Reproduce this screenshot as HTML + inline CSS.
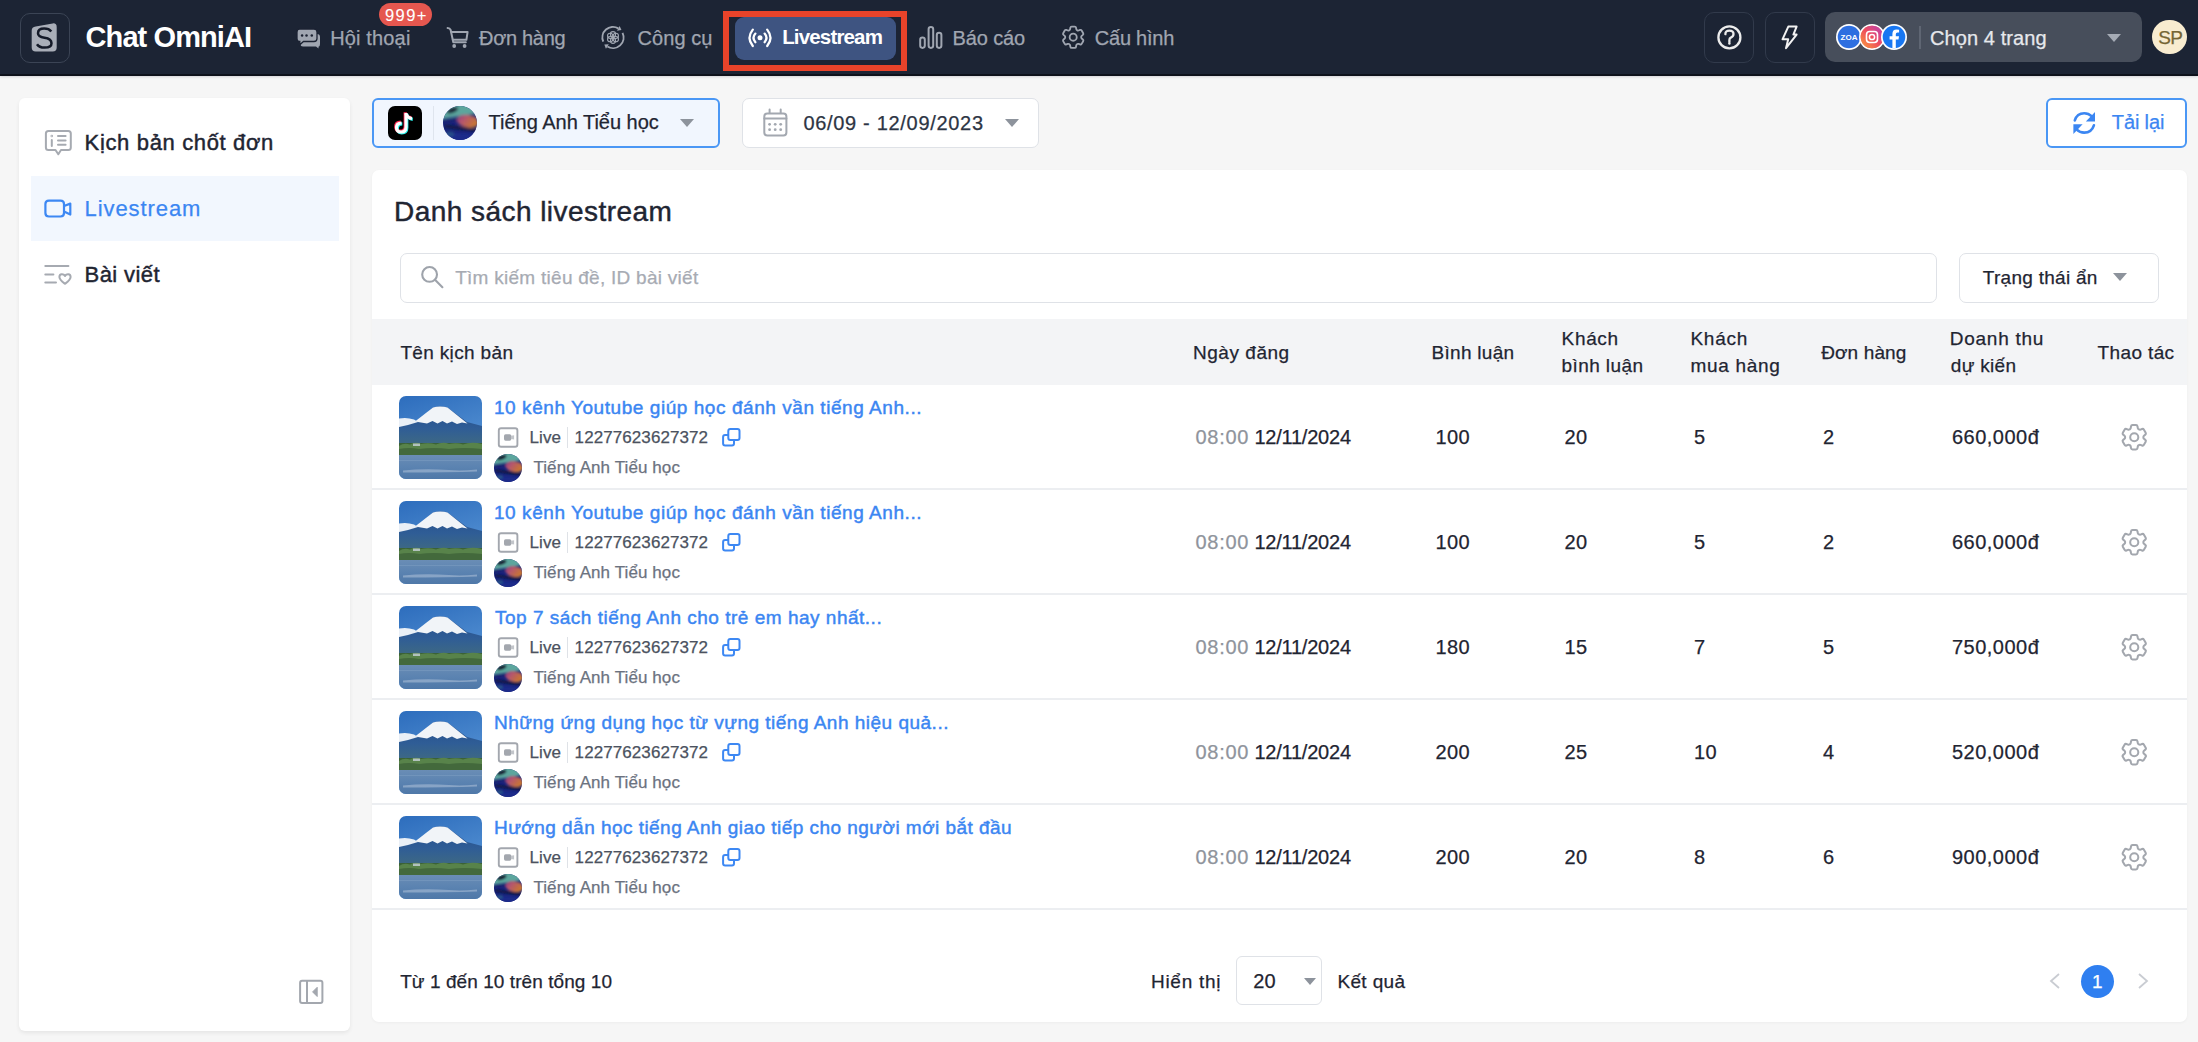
<!DOCTYPE html>
<html><head><meta charset="utf-8"><title>Chat OmniAI - Livestream</title>
<style>
html,body{margin:0;padding:0;}
body{width:2198px;height:1042px;position:relative;overflow:hidden;background:#f6f6f6;font-family:"Liberation Sans", sans-serif;}
.a{position:absolute;}
.t{position:absolute;white-space:nowrap;-webkit-text-stroke:0.25px currentColor;}
svg.a{display:block;}
</style></head><body>
<div class="a" style="left:0px;top:0px;width:2198px;height:75px;background:#1c2434;box-shadow:0 1px 3px rgba(20,20,40,0.25);"></div>
<div class="a" style="left:0px;top:73.5px;width:2198px;height:2px;background:#0e121b;"></div>
<div class="a" style="left:19.5px;top:12.5px;width:50px;height:50px;box-sizing:border-box;border:1.8px solid #3b4455;border-radius:10px;"></div>
<svg class="a" style="left:0px;top:0px" width="90" height="75" viewBox="0 0 90 75"><path d="M35.7 26.6 L52.7 23.4 Q56.7 23 56.7 27 V47.5 Q56.7 51.5 52.7 51.5 H35.7 Q31.7 51.5 31.7 47.5 V30.6 Q31.7 27.3 35.7 26.6 Z" fill="#a9aeb8"/><path d="M51.3 31.5 Q49 28.6 44.2 28.6 Q38 28.6 38 33.2 Q38 36.8 44.5 37.8 Q51.5 38.8 51.5 43.2 Q51.5 47.6 44.6 47.6 Q39.2 47.6 37 44.2" fill="none" stroke="#141a28" stroke-width="2.5" stroke-linecap="butt"/></svg>
<div class="t" id="t1" style="left:85.60px;top:22.85px;font-size:29px;line-height:29px;color:#ffffff;font-weight:700;letter-spacing:-0.920px;-webkit-text-stroke:0px;">Chat OmniAI</div>
<svg class="a" style="left:290px;top:20px" width="40" height="35" viewBox="0 0 40 35"><path d="M10.5 14 H27 Q30 14 30 17 V24 Q30 26.5 28.5 26.8 V28.5 L26 26.5 H13 Q10.5 26.5 10.5 24 Z" fill="#a0a6b1"/><path d="M9.5 9 H24 Q27 9 27 12 V18.5 Q27 21.5 24 21.5 H13.5 L9.8 24.8 V21.5 Q7 21.5 7 18.5 V12 Q7 9 9.5 9 Z" fill="#a0a6b1" stroke="#1c2333" stroke-width="1.3"/><circle cx="12.1" cy="15.4" r="1.25" fill="#1c2333"/><circle cx="16.5" cy="15.4" r="1.25" fill="#1c2333"/><circle cx="21.8" cy="15.4" r="1.25" fill="#1c2333"/></svg>
<div class="t" id="t2" style="left:330.20px;top:27.77px;font-size:20px;line-height:20px;color:#a0a6b1;font-weight:400;letter-spacing:0.150px;">Hội thoại</div>
<div class="a" style="left:379px;top:3px;width:53px;height:23px;border-radius:12px;background:#e5574f;"></div>
<div class="t" id="t3" style="left:385.00px;top:6.63px;font-size:16.5px;line-height:16.5px;color:#ffffff;font-weight:400;letter-spacing:1.400px;-webkit-text-stroke:0.1px currentColor;">999+</div>
<svg class="a" style="left:440px;top:20px" width="40" height="35" viewBox="0 0 40 35" fill="none" stroke="#a0a6b1" stroke-width="2" stroke-linejoin="round" stroke-linecap="round"><path d="M7.6 7.9 Q9.9 7.9 10.6 9.8 L13.3 22.2 H25.8"/><path d="M11.4 11.9 H27.6 L26.4 19.8 H12.8"/><circle cx="14.2" cy="26" r="1.9" fill="#a0a6b1" stroke="none"/><circle cx="24.6" cy="26" r="1.9" fill="#a0a6b1" stroke="none"/></svg>
<div class="t" id="t4" style="left:479.00px;top:27.77px;font-size:20px;line-height:20px;color:#a0a6b1;font-weight:400;letter-spacing:-0.309px;">Đơn hàng</div>
<svg class="a" style="left:595px;top:20px" width="36" height="35" viewBox="0 0 36 35" fill="none" stroke="#a0a6b1" stroke-width="1.9"><path d="M8.24 21.64 A10.6 10.6 0 0 1 23.30 8.32"/><path d="M27.53 12.85 A10.6 10.6 0 0 1 12.38 26.49"/><path d="M26.42 10.12 L24.65 5.98 L21.95 10.66 Z" fill="#a0a6b1" stroke="none"/><path d="M9.33 24.58 L10.95 28.78 L13.81 24.20 Z" fill="#a0a6b1" stroke="none"/><g stroke-width="1.1"><circle cx="20.86" cy="19.15" r="2.6"/><circle cx="18.00" cy="20.80" r="2.6"/><circle cx="15.14" cy="19.15" r="2.6"/><circle cx="15.14" cy="15.85" r="2.6"/><circle cx="18.00" cy="14.20" r="2.6"/><circle cx="20.86" cy="15.85" r="2.6"/></g><circle cx="18" cy="17.5" r="1.1" fill="#a0a6b1" stroke="none"/></svg>
<div class="t" id="t5" style="left:637.40px;top:27.77px;font-size:20px;line-height:20px;color:#a0a6b1;font-weight:400;letter-spacing:0.102px;">Công cụ</div>
<div class="a" style="left:723px;top:11px;width:184px;height:60px;box-sizing:border-box;border:6px solid #e8432a;"></div>
<div class="a" style="left:735px;top:17px;width:161px;height:43px;background:#3e5481;border-radius:9px;"></div>
<svg class="a" style="left:740px;top:20px" width="40" height="35" viewBox="0 0 40 35" fill="none" stroke="#ffffff" stroke-width="2.3" stroke-linecap="round"><path d="M12.8 9.6 Q6.2 17.8 12.8 26"/><path d="M15.4 13.6 Q11.6 17.8 15.4 22.2"/><path d="M27.2 9.6 Q33.8 17.8 27.2 26"/><path d="M24.6 13.6 Q28.4 17.8 24.6 22.2"/><circle cx="20" cy="17.8" r="2.5" fill="#fff" stroke="none"/></svg>
<div class="t" id="t6" style="left:782.20px;top:27.45px;font-size:20.5px;line-height:20.5px;color:#ffffff;font-weight:700;letter-spacing:-0.839px;-webkit-text-stroke:0px;">Livestream</div>
<svg class="a" style="left:912px;top:20px" width="40" height="35" viewBox="0 0 40 35" fill="none" stroke="#a0a6b1" stroke-width="2"><rect x="8.2" y="17.5" width="4.6" height="10.4" rx="2.3"/><rect x="16.6" y="6.9" width="4.6" height="21" rx="2.3"/><rect x="24.8" y="12.8" width="4.6" height="15.1" rx="2.3"/></svg>
<div class="t" id="t7" style="left:952.60px;top:27.77px;font-size:20px;line-height:20px;color:#a0a6b1;font-weight:400;letter-spacing:-0.135px;">Báo cáo</div>
<svg class="a" style="left:1058.5px;top:23px" width="28.4" height="28.4" viewBox="0 0 24 24" fill="none" stroke="#a0a6b1" stroke-width="1.55"><path d="M9.594 3.94c.09-.542.56-.94 1.11-.94h2.593c.55 0 1.02.398 1.11.94l.213 1.281c.063.374.313.686.645.87.074.04.147.083.22.127.325.196.72.257 1.075.124l1.217-.456a1.125 1.125 0 0 1 1.37.49l1.296 2.247a1.125 1.125 0 0 1-.26 1.431l-1.003.827c-.293.241-.438.613-.43.992a7.723 7.723 0 0 1 0 .255c-.008.378.137.75.43.991l1.004.827c.424.35.534.955.26 1.43l-1.298 2.247a1.125 1.125 0 0 1-1.369.491l-1.217-.456c-.355-.133-.75-.072-1.076.124a6.47 6.47 0 0 1-.22.128c-.331.183-.581.495-.644.869l-.213 1.281c-.09.543-.56.94-1.11.94h-2.594c-.55 0-1.019-.398-1.11-.94l-.213-1.281c-.062-.374-.312-.686-.644-.87a6.52 6.52 0 0 1-.22-.127c-.325-.196-.72-.257-1.076-.124l-1.217.456a1.125 1.125 0 0 1-1.369-.49l-1.297-2.247a1.125 1.125 0 0 1 .26-1.431l1.004-.827c.292-.24.437-.613.43-.991a6.932 6.932 0 0 1 0-.255c.007-.38-.138-.751-.43-.992l-1.004-.827a1.125 1.125 0 0 1-.26-1.43l1.297-2.247a1.125 1.125 0 0 1 1.37-.491l1.216.456c.356.133.751.072 1.076-.124.072-.044.146-.086.22-.128.332-.183.582-.495.644-.869l.214-1.28ZM15 12a3 3 0 1 1-6 0 3 3 0 0 1 6 0Z"/></svg>
<div class="t" id="t8" style="left:1094.80px;top:27.77px;font-size:20px;line-height:20px;color:#a0a6b1;font-weight:400;letter-spacing:-0.231px;">Cấu hình</div>
<div class="a" style="left:1704px;top:12px;width:50px;height:50.5px;box-sizing:border-box;border:1.8px solid #313a4b;border-radius:10px;"></div>
<svg class="a" style="left:1700px;top:8px" width="60" height="60" viewBox="0 0 60 60" fill="none" stroke="#ececec" stroke-width="2.3" stroke-linecap="round"><circle cx="29.4" cy="29.4" r="11"/><path d="M25.4 26.2 Q25.2 22.6 29.4 22.6 Q33.5 22.6 33.5 26 Q33.5 28.5 30.8 29.6 Q29.4 30.2 29.4 32 V34.3"/><circle cx="29.4" cy="35.6" r="1.2" fill="#ececec" stroke="none"/></svg>
<div class="a" style="left:1765px;top:12px;width:50px;height:50.5px;box-sizing:border-box;border:1.8px solid #313a4b;border-radius:10px;"></div>
<svg class="a" style="left:1760px;top:8px" width="60" height="60" viewBox="0 0 60 60" fill="none" stroke="#f2f2f2" stroke-width="2" stroke-linejoin="round"><path d="M28.3 18.6 H36.6 L33.4 26.6 H36.6 L26 40.2 L28.2 31.3 H22.5 Z"/></svg>
<div class="a" style="left:1825px;top:12px;width:317px;height:50px;background:#474e5b;border-radius:10px;"></div>
<svg class="a" style="left:1835px;top:22px" width="76" height="30" viewBox="0 0 76 30"><circle cx="14" cy="15" r="13" fill="#fff"/><circle cx="14" cy="15" r="11.3" fill="#2e6fe0"/><text x="14" y="18" text-anchor="middle" font-family="Liberation Sans" font-weight="700" font-size="8" fill="#fff">ZOA</text><circle cx="37" cy="15" r="13" fill="#fff"/><circle cx="37" cy="15" r="11.3" fill="#e8573f"/><circle cx="37" cy="15" r="11.3" fill="url(#ig)"/><rect x="31.5" y="9.5" width="11" height="11" rx="3.2" fill="none" stroke="#fff" stroke-width="1.6"/><circle cx="37" cy="15" r="2.6" fill="none" stroke="#fff" stroke-width="1.5"/><circle cx="59" cy="15" r="13" fill="#fff"/><circle cx="59" cy="15" r="11.3" fill="#1877f2"/><path d="M60.8 26.3 V17.5 H63.5 L64 14.2 H60.8 V12.3 Q60.8 10.6 62.5 10.6 H64.1 V7.8 Q62.8 7.6 61.6 7.6 Q57.4 7.6 57.4 11.9 V14.2 H54.6 V17.5 H57.4 V26.3 Z" fill="#fff"/><defs><linearGradient id="ig" x1="0" y1="1" x2="1" y2="0"><stop offset="0" stop-color="#f9a13a"/><stop offset="0.5" stop-color="#ef4c5e"/><stop offset="1" stop-color="#b13fc0"/></linearGradient></defs></svg>
<div class="a" style="left:1919px;top:26px;width:1.5px;height:23px;background:#5f6673;"></div>
<div class="t" id="t9" style="left:1930.00px;top:28.07px;font-size:20px;line-height:20px;color:#e6e8ec;font-weight:400;letter-spacing:0.091px;">Chọn 4 trang</div>
<svg class="a" style="left:2107px;top:34px" width="14" height="8" viewBox="0 0 14 8"><path d="M0 0 H14 L7 8 Z" fill="#a5abb5"/></svg>
<div class="a" style="left:2152.3px;top:19.8px;width:34.5px;height:34.5px;background:#f8ecd0;border-radius:50%;"></div>
<div class="t" id="t10" style="left:2158.20px;top:27.72px;font-size:19px;line-height:19px;color:#756634;font-weight:400;letter-spacing:-0.600px;">SP</div>
<div class="a" style="left:19px;top:98px;width:331px;height:932.5px;background:#fff;border-radius:6px;box-shadow:0 2px 4px rgba(0,0,0,0.07);"></div>
<div class="a" style="left:31px;top:176px;width:308px;height:65px;background:#f2f7fe;"></div>
<svg class="a" style="left:38px;top:122px" width="40" height="40" viewBox="0 0 40 40" fill="none" stroke="#a6aab1" stroke-width="2" stroke-linecap="round" stroke-linejoin="round"><path d="M10.4 8.9 H30.3 Q32.8 8.9 32.8 11.4 V25.5 Q32.8 28 30.3 28 H23 L20.3 32.3 L17.5 28 H10.4 Q7.9 28 7.9 25.5 V11.4 Q7.9 8.9 10.4 8.9 Z"/><path d="M13.8 17.9 V24 M20 14 H27.6 M20 18.4 H27.6 M20 22.8 H27.6"/><circle cx="13.8" cy="14" r="0.4" stroke-width="1.8"/></svg>
<div class="t" id="t11" style="left:84.60px;top:132.38px;font-size:22px;line-height:22px;color:#1f2532;font-weight:400;letter-spacing:0.650px;-webkit-text-stroke:0.45px currentColor;">Kịch bản chốt đơn</div>
<svg class="a" style="left:38px;top:188px" width="40" height="40" viewBox="0 0 40 40" fill="none" stroke="#3d88f3" stroke-width="2.2" stroke-linejoin="round"><path d="M10.9 12.6 H22.5 Q26 12.6 26 16.1 V25 Q26 28.5 22.5 28.5 H10.9 Q7.4 28.5 7.4 25 V16.1 Q7.4 12.6 10.9 12.6 Z"/><path d="M26 18 L32.3 15.6 V26.6 L26 23.6"/></svg>
<div class="t" id="t12" style="left:84.60px;top:197.88px;font-size:22px;line-height:22px;color:#3b86f2;font-weight:400;letter-spacing:0.914px;">Livestream</div>
<svg class="a" style="left:38px;top:255px" width="40" height="40" viewBox="0 0 40 40" fill="none" stroke="#a6aab1" stroke-width="2" stroke-linecap="round" stroke-linejoin="round"><path d="M7.3 11.1 H30.4 M7.3 19.6 H15.4 M7.3 27.6 H18"/><path d="M27 21 C25.6 18.6 21.4 18.4 21.4 21.9 C21.4 24.6 24.6 26.9 27 28.8 C29.4 26.9 32.6 24.6 32.6 21.9 C32.6 18.4 28.4 18.6 27 21 Z"/></svg>
<div class="t" id="t13" style="left:84.60px;top:264.38px;font-size:22px;line-height:22px;color:#1f2532;font-weight:400;letter-spacing:0.405px;-webkit-text-stroke:0.45px currentColor;">Bài viết</div>
<svg class="a" style="left:292px;top:972px" width="38" height="38" viewBox="0 0 38 38" fill="none" stroke="#a3a7ae" stroke-width="2"><rect x="8.1" y="8.7" width="22.3" height="22.4" rx="2"/><path d="M15 8.7 V31.1"/><path d="M20.6 19.9 L25.2 15.3 V24.5 Z" fill="#a3a7ae" stroke="#a3a7ae" stroke-width="1" stroke-linejoin="round"/></svg>
<div class="a" style="left:372px;top:98px;width:348px;height:50px;box-sizing:border-box;background:#f1f6fe;border:2px solid #4a97f5;border-radius:6px;"></div>
<svg class="a" style="left:388px;top:106px" width="34" height="34" viewBox="0 0 34 34"><rect width="34" height="34" rx="7" fill="#000"/><g transform="translate(0.8,0.8)" fill="none" stroke="#25f4ee" stroke-width="3.2" stroke-linecap="butt"><path d="M18 7 V21 Q18 26 13 26 Q8.5 26 8.5 21.5 Q8.5 17 13.5 17"/><path d="M18 8 Q19.5 12 24 12.5"/></g><g transform="translate(-0.8,-0.8)" fill="none" stroke="#fe2c55" stroke-width="3.2"><path d="M18 7 V21 Q18 26 13 26 Q8.5 26 8.5 21.5 Q8.5 17 13.5 17"/><path d="M18 8 Q19.5 12 24 12.5"/></g><g fill="none" stroke="#ffffff" stroke-width="3.2"><path d="M18 7 V21 Q18 26 13 26 Q8.5 26 8.5 21.5 Q8.5 17 13.5 17"/><path d="M18 8 Q19.5 12 24 12.5"/></g></svg>
<div class="a" style="left:433px;top:106px;width:1px;height:34px;background:#dfe5ee;"></div>
<svg class="a" style="left:443px;top:106px" width="34" height="34" viewBox="0 0 40 40"><defs><clipPath id="avch"><circle cx="20" cy="20" r="20"/></clipPath><filter id="avfh" x="-20%" y="-20%" width="140%" height="140%"><feGaussianBlur stdDeviation="1.6"/></filter><linearGradient id="avph" x1="0" y1="0" x2="1" y2="0.3"><stop offset="0" stop-color="#8a3a80"/><stop offset="0.4" stop-color="#b5566e"/><stop offset="1" stop-color="#c9782e"/></linearGradient></defs><g clip-path="url(#avch)"><rect width="40" height="40" fill="#18227a"/><g filter="url(#avfh)"><path d="M-5 -5 H45 V8 L0 15 H-5 Z" fill="#5ba69d"/><ellipse cx="11" cy="5" rx="7" ry="3" fill="#151830" transform="rotate(-20 11 5)"/><path d="M-5 17 L45 10 V14 L-5 20 Z" fill="#1b2470"/><ellipse cx="29" cy="18" rx="13" ry="7.5" fill="url(#avph)" transform="rotate(12 29 18)"/><path d="M2 22 Q20 24 42 28 L42 31 Q20 28 2 25 Z" fill="#0f1433" opacity="0.85"/><path d="M-5 32 Q20 30 45 34 V45 H-5 Z" fill="#1a2a8a"/><ellipse cx="8" cy="33" rx="5" ry="3" fill="#2f6a8a" opacity="0.6"/></g></g></svg>
<div class="t" id="t14" style="left:488.60px;top:111.67px;font-size:20px;line-height:20px;color:#1f2532;font-weight:400;letter-spacing:-0.018px;">Tiếng Anh Tiểu học</div>
<svg class="a" style="left:680px;top:119px" width="14" height="8" viewBox="0 0 14 8"><path d="M0 0 H14 L7 8 Z" fill="#8d939c"/></svg>
<div class="a" style="left:742px;top:98px;width:297px;height:50px;box-sizing:border-box;background:#fff;border:1.5px solid #dfe2e7;border-radius:7px;"></div>
<svg class="a" style="left:755px;top:103px" width="40" height="40" viewBox="0 0 40 40" fill="none" stroke="#a3a8b0" stroke-width="2" stroke-linecap="round"><rect x="9.3" y="10.4" width="22.1" height="22" rx="3"/><path d="M9.3 15.5 H31.4 M14.6 6.6 V10 M25.7 6.6 V10"/><g fill="#a3a8b0" stroke="none"><circle cx="14.6" cy="21.3" r="1.4"/><circle cx="20.2" cy="21.3" r="1.4"/><circle cx="25.7" cy="21.3" r="1.4"/><circle cx="14.6" cy="26.7" r="1.4"/><circle cx="20.2" cy="26.7" r="1.4"/><circle cx="25.7" cy="26.7" r="1.4"/></g></svg>
<div class="t" id="t15" style="left:803.40px;top:112.67px;font-size:20px;line-height:20px;color:#2d3544;font-weight:400;letter-spacing:0.688px;">06/09 - 12/09/2023</div>
<svg class="a" style="left:1005px;top:119px" width="14" height="8" viewBox="0 0 14 8"><path d="M0 0 H14 L7 8 Z" fill="#8d939c"/></svg>
<div class="a" style="left:2046px;top:98px;width:141px;height:50px;box-sizing:border-box;background:#fff;border:2px solid #4a97f5;border-radius:6px;"></div>
<svg class="a" style="left:2064px;top:103px" width="40" height="40" viewBox="0 0 40 40" fill="none" stroke="#3b86f2" stroke-width="2.6" stroke-linecap="round"><path d="M10.8 17.4 Q13 10.2 20.2 10.2 Q24.6 10.2 27.6 13.2"/><path d="M29.9 22.3 Q27.6 29.6 20.2 29.6 Q15.8 29.6 12.8 26.6"/><path d="M31 9 V18.6 H21.8 Z" fill="#3b86f2" stroke="none"/><path d="M9.4 30.9 V21.2 H18.6 Z" fill="#3b86f2" stroke="none"/></svg>
<div class="t" id="t16" style="left:2111.80px;top:112.07px;font-size:20px;line-height:20px;color:#3b86f2;font-weight:400;letter-spacing:-0.128px;">Tải lại</div>
<div class="a" style="left:372px;top:170px;width:1815px;height:851.7px;background:#fff;border-radius:7px;box-shadow:0 1px 3px rgba(0,0,0,0.04);"></div>
<div class="t" id="t17" style="left:394.00px;top:198.30px;font-size:28px;line-height:28px;color:#1f2532;font-weight:400;letter-spacing:0.453px;-webkit-text-stroke:0.45px currentColor;">Danh sách livestream</div>
<div class="a" style="left:400px;top:253px;width:1537px;height:50px;box-sizing:border-box;border:1.5px solid #dfe2e7;border-radius:7px;"></div>
<svg class="a" style="left:415px;top:260px" width="35" height="35" viewBox="0 0 35 35" fill="none" stroke="#9ea3ab" stroke-width="2.1" stroke-linecap="round"><circle cx="14.6" cy="14.4" r="7.4"/><path d="M20 19.8 L27.4 27.2"/></svg>
<div class="t" id="t18" style="left:455.20px;top:268.42px;font-size:19px;line-height:19px;color:#a7abb3;font-weight:400;letter-spacing:0.270px;">Tìm kiếm tiêu đề, ID bài viết</div>
<div class="a" style="left:1959px;top:253px;width:200px;height:50px;box-sizing:border-box;border:1.5px solid #dfe2e7;border-radius:7px;"></div>
<div class="t" id="t19" style="left:1982.80px;top:268.42px;font-size:19px;line-height:19px;color:#1f2532;font-weight:400;letter-spacing:0.278px;">Trạng thái ẩn</div>
<svg class="a" style="left:2113px;top:273px" width="14" height="8" viewBox="0 0 14 8"><path d="M0 0 H14 L7 8 Z" fill="#8d939c"/></svg>
<div class="a" style="left:372px;top:319px;width:1815px;height:66px;background:#f3f4f6;"></div>
<div class="t" id="t20" style="left:400.40px;top:342.92px;font-size:19px;line-height:19px;color:#1f2532;font-weight:400;letter-spacing:0.343px;">Tên kịch bản</div>
<div class="t" id="t21" style="left:1193.00px;top:342.92px;font-size:19px;line-height:19px;color:#1f2532;font-weight:400;letter-spacing:0.536px;">Ngày đăng</div>
<div class="t" id="t22" style="left:1431.60px;top:342.92px;font-size:19px;line-height:19px;color:#1f2532;font-weight:400;letter-spacing:0.275px;">Bình luận</div>
<div class="t" id="t23" style="left:1561.60px;top:328.92px;font-size:19px;line-height:19px;color:#1f2532;font-weight:400;letter-spacing:0.650px;">Khách</div>
<div class="t" id="t24" style="left:1561.60px;top:356.42px;font-size:19px;line-height:19px;color:#1f2532;font-weight:400;letter-spacing:0.400px;">bình luận</div>
<div class="t" id="t25" style="left:1690.40px;top:328.92px;font-size:19px;line-height:19px;color:#1f2532;font-weight:400;letter-spacing:0.750px;">Khách</div>
<div class="t" id="t26" style="left:1690.40px;top:356.42px;font-size:19px;line-height:19px;color:#1f2532;font-weight:400;letter-spacing:0.691px;">mua hàng</div>
<div class="t" id="t27" style="left:1821.20px;top:342.92px;font-size:19px;line-height:19px;color:#1f2532;font-weight:400;letter-spacing:0.120px;">Đơn hàng</div>
<div class="t" id="t28" style="left:1949.80px;top:328.92px;font-size:19px;line-height:19px;color:#1f2532;font-weight:400;letter-spacing:0.739px;">Doanh thu</div>
<div class="t" id="t29" style="left:1950.80px;top:356.42px;font-size:19px;line-height:19px;color:#1f2532;font-weight:400;letter-spacing:0.304px;">dự kiến</div>
<div class="t" id="t30" style="left:2097.60px;top:342.92px;font-size:19px;line-height:19px;color:#1f2532;font-weight:400;letter-spacing:0.369px;">Thao tác</div>
<svg class="a" style="left:399px;top:396px" width="83" height="83" viewBox="0 0 83 83"><defs><linearGradient id="sky0" x1="0" y1="0" x2="0.3" y2="1"><stop offset="0" stop-color="#2d6dbd"/><stop offset="1" stop-color="#5e9ad8"/></linearGradient><linearGradient id="mt0" x1="0" y1="0" x2="0" y2="1"><stop offset="0" stop-color="#244c8a"/><stop offset="0.55" stop-color="#2f5d96"/><stop offset="1" stop-color="#3f6a82"/></linearGradient><linearGradient id="wt0" x1="0" y1="0" x2="0" y2="1"><stop offset="0" stop-color="#6a8db5"/><stop offset="0.5" stop-color="#5b83b1"/><stop offset="1" stop-color="#4f78a8"/></linearGradient><clipPath id="cp0"><rect width="83" height="83" rx="7"/></clipPath></defs><g clip-path="url(#cp0)"><rect width="83" height="83" fill="url(#sky0)"/><path d="M0 30 L20 24 L34 11.5 Q37 10.5 41 10.5 Q45.5 10.5 48.5 11.5 L68 26 L83 30 V50 H0 Z" fill="url(#mt0)"/><path d="M16 25.5 L34 11.5 Q37 10.5 41 10.5 Q45.5 10.5 48.5 11.5 L68.5 27.5 L63 26.5 L58 28 L53 25.5 L48 27.5 L43.5 25 L38.5 27.5 L33.5 25 L28 27.5 L22 26.5 Z" fill="#f1f4f8"/><path d="M0 22.5 Q8 21 15 23.5 L19 26 L9 29 L0 31 Z" fill="#e9eff6"/><rect y="47" width="83" height="13" fill="#3b6236"/><path d="M0 50 Q5 46.5 11 48.5 Q16 45.5 22 48 Q30 46.5 37 48.5 Q44 45.5 50 48 Q58 46.5 64 48.5 Q72 45.5 83 48 V55 H0 Z" fill="#58834a"/><path d="M0 53 Q10 51 20 53 Q35 51 50 53 Q65 51 83 53 V59 H0 Z" fill="#43693c"/><rect x="14" y="47.5" width="7" height="2.5" fill="#c9d2da" opacity="0.8"/><rect y="59" width="83" height="24" fill="url(#wt0)"/><path d="M4 74.5 Q25 72.5 50 74 Q62 75 78 73.5 L78 75.5 Q50 76.5 4 76.5 Z" fill="#a9bdd6" opacity="0.6"/><path d="M0 64 H83 V65 H0 Z" fill="#7f9fc3" opacity="0.5"/></g></svg>
<div class="t" id="t31" style="left:494.00px;top:397.92px;font-size:19px;line-height:19px;color:#3b86f2;font-weight:400;letter-spacing:0.556px;-webkit-text-stroke:0.45px #3b86f2;">10 kênh Youtube giúp học đánh vần tiếng Anh...</div>
<svg class="a" style="left:492px;top:422px" width="32" height="32" viewBox="0 0 32 32" fill="none" stroke="#a3a7ae" stroke-width="1.9"><rect x="6.8" y="6.2" width="18.6" height="18.6" rx="2.3"/><rect x="12" y="12.3" width="7.3" height="6.4" rx="1.6" fill="#a3a7ae" stroke="none"/><path d="M19 13.8 L22.1 13.2 V17.6 L19 17 Z" fill="#c2c5ca" stroke="none"/></svg>
<div class="t" id="t32" style="left:529.60px;top:429.11px;font-size:17px;line-height:17px;color:#4b5260;font-weight:400;letter-spacing:0.063px;">Live</div>
<div class="a" style="left:567px;top:427px;width:1px;height:21px;background:#dfe2e7;"></div>
<div class="t" id="t33" style="left:574.60px;top:429.11px;font-size:17px;line-height:17px;color:#4b5260;font-weight:400;letter-spacing:0.084px;">12277623627372</div>
<svg class="a" style="left:715px;top:422px" width="32" height="32" viewBox="0 0 32 32" fill="none" stroke="#3d88f3" stroke-width="2" stroke-linejoin="round"><rect x="13.3" y="7.1" width="11.2" height="10.9" rx="2"/><path d="M13.3 13 H10.1 Q8.1 13 8.1 15 V21.6 Q8.1 23.6 10.1 23.6 H17 Q19 23.6 19 21.6 V18"/></svg>
<svg class="a" style="left:494px;top:454px" width="28" height="28" viewBox="0 0 40 40"><defs><clipPath id="avcr0"><circle cx="20" cy="20" r="20"/></clipPath><filter id="avfr0" x="-20%" y="-20%" width="140%" height="140%"><feGaussianBlur stdDeviation="1.6"/></filter><linearGradient id="avpr0" x1="0" y1="0" x2="1" y2="0.3"><stop offset="0" stop-color="#8a3a80"/><stop offset="0.4" stop-color="#b5566e"/><stop offset="1" stop-color="#c9782e"/></linearGradient></defs><g clip-path="url(#avcr0)"><rect width="40" height="40" fill="#18227a"/><g filter="url(#avfr0)"><path d="M-5 -5 H45 V8 L0 15 H-5 Z" fill="#5ba69d"/><ellipse cx="11" cy="5" rx="7" ry="3" fill="#151830" transform="rotate(-20 11 5)"/><path d="M-5 17 L45 10 V14 L-5 20 Z" fill="#1b2470"/><ellipse cx="29" cy="18" rx="13" ry="7.5" fill="url(#avpr0)" transform="rotate(12 29 18)"/><path d="M2 22 Q20 24 42 28 L42 31 Q20 28 2 25 Z" fill="#0f1433" opacity="0.85"/><path d="M-5 32 Q20 30 45 34 V45 H-5 Z" fill="#1a2a8a"/><ellipse cx="8" cy="33" rx="5" ry="3" fill="#2f6a8a" opacity="0.6"/></g></g></svg>
<div class="t" id="t34" style="left:533.40px;top:459.11px;font-size:17px;line-height:17px;color:#6b7280;font-weight:400;letter-spacing:0.095px;">Tiếng Anh Tiểu học</div>
<div class="t" id="t35" style="left:1195.40px;top:426.77px;font-size:20px;line-height:20px;color:#8f949c;font-weight:400;letter-spacing:0.750px;">08:00</div>
<div class="t" id="t36" style="left:1254.40px;top:426.77px;font-size:20px;line-height:20px;color:#1f2532;font-weight:400;letter-spacing:-0.222px;">12/11/2024</div>
<div class="t" id="t37" style="left:1435.50px;top:426.77px;font-size:20px;line-height:20px;color:#1f2532;font-weight:400;letter-spacing:0.400px;">100</div>
<div class="t" id="t38" style="left:1564.50px;top:426.77px;font-size:20px;line-height:20px;color:#1f2532;font-weight:400;letter-spacing:0.400px;">20</div>
<div class="t" id="t39" style="left:1694.00px;top:426.77px;font-size:20px;line-height:20px;color:#1f2532;font-weight:400;letter-spacing:0.400px;">5</div>
<div class="t" id="t40" style="left:1823.00px;top:426.77px;font-size:20px;line-height:20px;color:#1f2532;font-weight:400;letter-spacing:0.400px;">2</div>
<div class="t" id="t41" style="left:1952.00px;top:426.77px;font-size:20px;line-height:20px;color:#1f2532;font-weight:400;letter-spacing:0.480px;">660,000đ</div>
<svg class="a" style="left:2117.8px;top:421px" width="32.5" height="32.5" viewBox="0 0 24 24" fill="none" stroke="#a3a7ae" stroke-width="1.5"><path d="M9.594 3.94c.09-.542.56-.94 1.11-.94h2.593c.55 0 1.02.398 1.11.94l.213 1.281c.063.374.313.686.645.87.074.04.147.083.22.127.325.196.72.257 1.075.124l1.217-.456a1.125 1.125 0 0 1 1.37.49l1.296 2.247a1.125 1.125 0 0 1-.26 1.431l-1.003.827c-.293.241-.438.613-.43.992a7.723 7.723 0 0 1 0 .255c-.008.378.137.75.43.991l1.004.827c.424.35.534.955.26 1.43l-1.298 2.247a1.125 1.125 0 0 1-1.369.491l-1.217-.456c-.355-.133-.75-.072-1.076.124a6.47 6.47 0 0 1-.22.128c-.331.183-.581.495-.644.869l-.213 1.281c-.09.543-.56.94-1.11.94h-2.594c-.55 0-1.019-.398-1.11-.94l-.213-1.281c-.062-.374-.312-.686-.644-.87a6.52 6.52 0 0 1-.22-.127c-.325-.196-.72-.257-1.076-.124l-1.217.456a1.125 1.125 0 0 1-1.369-.49l-1.297-2.247a1.125 1.125 0 0 1 .26-1.431l1.004-.827c.292-.24.437-.613.43-.991a6.932 6.932 0 0 1 0-.255c.007-.38-.138-.751-.43-.992l-1.004-.827a1.125 1.125 0 0 1-.26-1.43l1.297-2.247a1.125 1.125 0 0 1 1.37-.491l1.216.456c.356.133.751.072 1.076-.124.072-.044.146-.086.22-.128.332-.183.582-.495.644-.869l.214-1.28ZM15 12a3 3 0 1 1-6 0 3 3 0 0 1 6 0Z"/></svg>
<div class="a" style="left:372px;top:488px;width:1815px;height:2px;background:#eceef1;"></div>
<svg class="a" style="left:399px;top:501px" width="83" height="83" viewBox="0 0 83 83"><defs><linearGradient id="sky1" x1="0" y1="0" x2="0.3" y2="1"><stop offset="0" stop-color="#2d6dbd"/><stop offset="1" stop-color="#5e9ad8"/></linearGradient><linearGradient id="mt1" x1="0" y1="0" x2="0" y2="1"><stop offset="0" stop-color="#244c8a"/><stop offset="0.55" stop-color="#2f5d96"/><stop offset="1" stop-color="#3f6a82"/></linearGradient><linearGradient id="wt1" x1="0" y1="0" x2="0" y2="1"><stop offset="0" stop-color="#6a8db5"/><stop offset="0.5" stop-color="#5b83b1"/><stop offset="1" stop-color="#4f78a8"/></linearGradient><clipPath id="cp1"><rect width="83" height="83" rx="7"/></clipPath></defs><g clip-path="url(#cp1)"><rect width="83" height="83" fill="url(#sky1)"/><path d="M0 30 L20 24 L34 11.5 Q37 10.5 41 10.5 Q45.5 10.5 48.5 11.5 L68 26 L83 30 V50 H0 Z" fill="url(#mt1)"/><path d="M16 25.5 L34 11.5 Q37 10.5 41 10.5 Q45.5 10.5 48.5 11.5 L68.5 27.5 L63 26.5 L58 28 L53 25.5 L48 27.5 L43.5 25 L38.5 27.5 L33.5 25 L28 27.5 L22 26.5 Z" fill="#f1f4f8"/><path d="M0 22.5 Q8 21 15 23.5 L19 26 L9 29 L0 31 Z" fill="#e9eff6"/><rect y="47" width="83" height="13" fill="#3b6236"/><path d="M0 50 Q5 46.5 11 48.5 Q16 45.5 22 48 Q30 46.5 37 48.5 Q44 45.5 50 48 Q58 46.5 64 48.5 Q72 45.5 83 48 V55 H0 Z" fill="#58834a"/><path d="M0 53 Q10 51 20 53 Q35 51 50 53 Q65 51 83 53 V59 H0 Z" fill="#43693c"/><rect x="14" y="47.5" width="7" height="2.5" fill="#c9d2da" opacity="0.8"/><rect y="59" width="83" height="24" fill="url(#wt1)"/><path d="M4 74.5 Q25 72.5 50 74 Q62 75 78 73.5 L78 75.5 Q50 76.5 4 76.5 Z" fill="#a9bdd6" opacity="0.6"/><path d="M0 64 H83 V65 H0 Z" fill="#7f9fc3" opacity="0.5"/></g></svg>
<div class="t" id="t42" style="left:494.00px;top:502.92px;font-size:19px;line-height:19px;color:#3b86f2;font-weight:400;letter-spacing:0.556px;-webkit-text-stroke:0.45px #3b86f2;">10 kênh Youtube giúp học đánh vần tiếng Anh...</div>
<svg class="a" style="left:492px;top:527px" width="32" height="32" viewBox="0 0 32 32" fill="none" stroke="#a3a7ae" stroke-width="1.9"><rect x="6.8" y="6.2" width="18.6" height="18.6" rx="2.3"/><rect x="12" y="12.3" width="7.3" height="6.4" rx="1.6" fill="#a3a7ae" stroke="none"/><path d="M19 13.8 L22.1 13.2 V17.6 L19 17 Z" fill="#c2c5ca" stroke="none"/></svg>
<div class="t" id="t43" style="left:529.60px;top:534.11px;font-size:17px;line-height:17px;color:#4b5260;font-weight:400;letter-spacing:0.063px;">Live</div>
<div class="a" style="left:567px;top:532px;width:1px;height:21px;background:#dfe2e7;"></div>
<div class="t" id="t44" style="left:574.60px;top:534.11px;font-size:17px;line-height:17px;color:#4b5260;font-weight:400;letter-spacing:0.084px;">12277623627372</div>
<svg class="a" style="left:715px;top:527px" width="32" height="32" viewBox="0 0 32 32" fill="none" stroke="#3d88f3" stroke-width="2" stroke-linejoin="round"><rect x="13.3" y="7.1" width="11.2" height="10.9" rx="2"/><path d="M13.3 13 H10.1 Q8.1 13 8.1 15 V21.6 Q8.1 23.6 10.1 23.6 H17 Q19 23.6 19 21.6 V18"/></svg>
<svg class="a" style="left:494px;top:559px" width="28" height="28" viewBox="0 0 40 40"><defs><clipPath id="avcr1"><circle cx="20" cy="20" r="20"/></clipPath><filter id="avfr1" x="-20%" y="-20%" width="140%" height="140%"><feGaussianBlur stdDeviation="1.6"/></filter><linearGradient id="avpr1" x1="0" y1="0" x2="1" y2="0.3"><stop offset="0" stop-color="#8a3a80"/><stop offset="0.4" stop-color="#b5566e"/><stop offset="1" stop-color="#c9782e"/></linearGradient></defs><g clip-path="url(#avcr1)"><rect width="40" height="40" fill="#18227a"/><g filter="url(#avfr1)"><path d="M-5 -5 H45 V8 L0 15 H-5 Z" fill="#5ba69d"/><ellipse cx="11" cy="5" rx="7" ry="3" fill="#151830" transform="rotate(-20 11 5)"/><path d="M-5 17 L45 10 V14 L-5 20 Z" fill="#1b2470"/><ellipse cx="29" cy="18" rx="13" ry="7.5" fill="url(#avpr1)" transform="rotate(12 29 18)"/><path d="M2 22 Q20 24 42 28 L42 31 Q20 28 2 25 Z" fill="#0f1433" opacity="0.85"/><path d="M-5 32 Q20 30 45 34 V45 H-5 Z" fill="#1a2a8a"/><ellipse cx="8" cy="33" rx="5" ry="3" fill="#2f6a8a" opacity="0.6"/></g></g></svg>
<div class="t" id="t45" style="left:533.40px;top:564.11px;font-size:17px;line-height:17px;color:#6b7280;font-weight:400;letter-spacing:0.095px;">Tiếng Anh Tiểu học</div>
<div class="t" id="t46" style="left:1195.40px;top:531.77px;font-size:20px;line-height:20px;color:#8f949c;font-weight:400;letter-spacing:0.750px;">08:00</div>
<div class="t" id="t47" style="left:1254.40px;top:531.77px;font-size:20px;line-height:20px;color:#1f2532;font-weight:400;letter-spacing:-0.222px;">12/11/2024</div>
<div class="t" id="t48" style="left:1435.50px;top:531.77px;font-size:20px;line-height:20px;color:#1f2532;font-weight:400;letter-spacing:0.400px;">100</div>
<div class="t" id="t49" style="left:1564.50px;top:531.77px;font-size:20px;line-height:20px;color:#1f2532;font-weight:400;letter-spacing:0.400px;">20</div>
<div class="t" id="t50" style="left:1694.00px;top:531.77px;font-size:20px;line-height:20px;color:#1f2532;font-weight:400;letter-spacing:0.400px;">5</div>
<div class="t" id="t51" style="left:1823.00px;top:531.77px;font-size:20px;line-height:20px;color:#1f2532;font-weight:400;letter-spacing:0.400px;">2</div>
<div class="t" id="t52" style="left:1952.00px;top:531.77px;font-size:20px;line-height:20px;color:#1f2532;font-weight:400;letter-spacing:0.480px;">660,000đ</div>
<svg class="a" style="left:2117.8px;top:526px" width="32.5" height="32.5" viewBox="0 0 24 24" fill="none" stroke="#a3a7ae" stroke-width="1.5"><path d="M9.594 3.94c.09-.542.56-.94 1.11-.94h2.593c.55 0 1.02.398 1.11.94l.213 1.281c.063.374.313.686.645.87.074.04.147.083.22.127.325.196.72.257 1.075.124l1.217-.456a1.125 1.125 0 0 1 1.37.49l1.296 2.247a1.125 1.125 0 0 1-.26 1.431l-1.003.827c-.293.241-.438.613-.43.992a7.723 7.723 0 0 1 0 .255c-.008.378.137.75.43.991l1.004.827c.424.35.534.955.26 1.43l-1.298 2.247a1.125 1.125 0 0 1-1.369.491l-1.217-.456c-.355-.133-.75-.072-1.076.124a6.47 6.47 0 0 1-.22.128c-.331.183-.581.495-.644.869l-.213 1.281c-.09.543-.56.94-1.11.94h-2.594c-.55 0-1.019-.398-1.11-.94l-.213-1.281c-.062-.374-.312-.686-.644-.87a6.52 6.52 0 0 1-.22-.127c-.325-.196-.72-.257-1.076-.124l-1.217.456a1.125 1.125 0 0 1-1.369-.49l-1.297-2.247a1.125 1.125 0 0 1 .26-1.431l1.004-.827c.292-.24.437-.613.43-.991a6.932 6.932 0 0 1 0-.255c.007-.38-.138-.751-.43-.992l-1.004-.827a1.125 1.125 0 0 1-.26-1.43l1.297-2.247a1.125 1.125 0 0 1 1.37-.491l1.216.456c.356.133.751.072 1.076-.124.072-.044.146-.086.22-.128.332-.183.582-.495.644-.869l.214-1.28ZM15 12a3 3 0 1 1-6 0 3 3 0 0 1 6 0Z"/></svg>
<div class="a" style="left:372px;top:593px;width:1815px;height:2px;background:#eceef1;"></div>
<svg class="a" style="left:399px;top:606px" width="83" height="83" viewBox="0 0 83 83"><defs><linearGradient id="sky2" x1="0" y1="0" x2="0.3" y2="1"><stop offset="0" stop-color="#2d6dbd"/><stop offset="1" stop-color="#5e9ad8"/></linearGradient><linearGradient id="mt2" x1="0" y1="0" x2="0" y2="1"><stop offset="0" stop-color="#244c8a"/><stop offset="0.55" stop-color="#2f5d96"/><stop offset="1" stop-color="#3f6a82"/></linearGradient><linearGradient id="wt2" x1="0" y1="0" x2="0" y2="1"><stop offset="0" stop-color="#6a8db5"/><stop offset="0.5" stop-color="#5b83b1"/><stop offset="1" stop-color="#4f78a8"/></linearGradient><clipPath id="cp2"><rect width="83" height="83" rx="7"/></clipPath></defs><g clip-path="url(#cp2)"><rect width="83" height="83" fill="url(#sky2)"/><path d="M0 30 L20 24 L34 11.5 Q37 10.5 41 10.5 Q45.5 10.5 48.5 11.5 L68 26 L83 30 V50 H0 Z" fill="url(#mt2)"/><path d="M16 25.5 L34 11.5 Q37 10.5 41 10.5 Q45.5 10.5 48.5 11.5 L68.5 27.5 L63 26.5 L58 28 L53 25.5 L48 27.5 L43.5 25 L38.5 27.5 L33.5 25 L28 27.5 L22 26.5 Z" fill="#f1f4f8"/><path d="M0 22.5 Q8 21 15 23.5 L19 26 L9 29 L0 31 Z" fill="#e9eff6"/><rect y="47" width="83" height="13" fill="#3b6236"/><path d="M0 50 Q5 46.5 11 48.5 Q16 45.5 22 48 Q30 46.5 37 48.5 Q44 45.5 50 48 Q58 46.5 64 48.5 Q72 45.5 83 48 V55 H0 Z" fill="#58834a"/><path d="M0 53 Q10 51 20 53 Q35 51 50 53 Q65 51 83 53 V59 H0 Z" fill="#43693c"/><rect x="14" y="47.5" width="7" height="2.5" fill="#c9d2da" opacity="0.8"/><rect y="59" width="83" height="24" fill="url(#wt2)"/><path d="M4 74.5 Q25 72.5 50 74 Q62 75 78 73.5 L78 75.5 Q50 76.5 4 76.5 Z" fill="#a9bdd6" opacity="0.6"/><path d="M0 64 H83 V65 H0 Z" fill="#7f9fc3" opacity="0.5"/></g></svg>
<div class="t" id="t53" style="left:495.00px;top:607.92px;font-size:19px;line-height:19px;color:#3b86f2;font-weight:400;letter-spacing:0.505px;-webkit-text-stroke:0.45px #3b86f2;">Top 7 sách tiếng Anh cho trẻ em hay nhất...</div>
<svg class="a" style="left:492px;top:632px" width="32" height="32" viewBox="0 0 32 32" fill="none" stroke="#a3a7ae" stroke-width="1.9"><rect x="6.8" y="6.2" width="18.6" height="18.6" rx="2.3"/><rect x="12" y="12.3" width="7.3" height="6.4" rx="1.6" fill="#a3a7ae" stroke="none"/><path d="M19 13.8 L22.1 13.2 V17.6 L19 17 Z" fill="#c2c5ca" stroke="none"/></svg>
<div class="t" id="t54" style="left:529.60px;top:639.11px;font-size:17px;line-height:17px;color:#4b5260;font-weight:400;letter-spacing:0.063px;">Live</div>
<div class="a" style="left:567px;top:637px;width:1px;height:21px;background:#dfe2e7;"></div>
<div class="t" id="t55" style="left:574.60px;top:639.11px;font-size:17px;line-height:17px;color:#4b5260;font-weight:400;letter-spacing:0.084px;">12277623627372</div>
<svg class="a" style="left:715px;top:632px" width="32" height="32" viewBox="0 0 32 32" fill="none" stroke="#3d88f3" stroke-width="2" stroke-linejoin="round"><rect x="13.3" y="7.1" width="11.2" height="10.9" rx="2"/><path d="M13.3 13 H10.1 Q8.1 13 8.1 15 V21.6 Q8.1 23.6 10.1 23.6 H17 Q19 23.6 19 21.6 V18"/></svg>
<svg class="a" style="left:494px;top:664px" width="28" height="28" viewBox="0 0 40 40"><defs><clipPath id="avcr2"><circle cx="20" cy="20" r="20"/></clipPath><filter id="avfr2" x="-20%" y="-20%" width="140%" height="140%"><feGaussianBlur stdDeviation="1.6"/></filter><linearGradient id="avpr2" x1="0" y1="0" x2="1" y2="0.3"><stop offset="0" stop-color="#8a3a80"/><stop offset="0.4" stop-color="#b5566e"/><stop offset="1" stop-color="#c9782e"/></linearGradient></defs><g clip-path="url(#avcr2)"><rect width="40" height="40" fill="#18227a"/><g filter="url(#avfr2)"><path d="M-5 -5 H45 V8 L0 15 H-5 Z" fill="#5ba69d"/><ellipse cx="11" cy="5" rx="7" ry="3" fill="#151830" transform="rotate(-20 11 5)"/><path d="M-5 17 L45 10 V14 L-5 20 Z" fill="#1b2470"/><ellipse cx="29" cy="18" rx="13" ry="7.5" fill="url(#avpr2)" transform="rotate(12 29 18)"/><path d="M2 22 Q20 24 42 28 L42 31 Q20 28 2 25 Z" fill="#0f1433" opacity="0.85"/><path d="M-5 32 Q20 30 45 34 V45 H-5 Z" fill="#1a2a8a"/><ellipse cx="8" cy="33" rx="5" ry="3" fill="#2f6a8a" opacity="0.6"/></g></g></svg>
<div class="t" id="t56" style="left:533.40px;top:669.11px;font-size:17px;line-height:17px;color:#6b7280;font-weight:400;letter-spacing:0.095px;">Tiếng Anh Tiểu học</div>
<div class="t" id="t57" style="left:1195.40px;top:636.77px;font-size:20px;line-height:20px;color:#8f949c;font-weight:400;letter-spacing:0.750px;">08:00</div>
<div class="t" id="t58" style="left:1254.40px;top:636.77px;font-size:20px;line-height:20px;color:#1f2532;font-weight:400;letter-spacing:-0.222px;">12/11/2024</div>
<div class="t" id="t59" style="left:1435.50px;top:636.77px;font-size:20px;line-height:20px;color:#1f2532;font-weight:400;letter-spacing:0.400px;">180</div>
<div class="t" id="t60" style="left:1564.50px;top:636.77px;font-size:20px;line-height:20px;color:#1f2532;font-weight:400;letter-spacing:0.400px;">15</div>
<div class="t" id="t61" style="left:1694.00px;top:636.77px;font-size:20px;line-height:20px;color:#1f2532;font-weight:400;letter-spacing:0.400px;">7</div>
<div class="t" id="t62" style="left:1823.00px;top:636.77px;font-size:20px;line-height:20px;color:#1f2532;font-weight:400;letter-spacing:0.400px;">5</div>
<div class="t" id="t63" style="left:1952.00px;top:636.77px;font-size:20px;line-height:20px;color:#1f2532;font-weight:400;letter-spacing:0.480px;">750,000đ</div>
<svg class="a" style="left:2117.8px;top:631px" width="32.5" height="32.5" viewBox="0 0 24 24" fill="none" stroke="#a3a7ae" stroke-width="1.5"><path d="M9.594 3.94c.09-.542.56-.94 1.11-.94h2.593c.55 0 1.02.398 1.11.94l.213 1.281c.063.374.313.686.645.87.074.04.147.083.22.127.325.196.72.257 1.075.124l1.217-.456a1.125 1.125 0 0 1 1.37.49l1.296 2.247a1.125 1.125 0 0 1-.26 1.431l-1.003.827c-.293.241-.438.613-.43.992a7.723 7.723 0 0 1 0 .255c-.008.378.137.75.43.991l1.004.827c.424.35.534.955.26 1.43l-1.298 2.247a1.125 1.125 0 0 1-1.369.491l-1.217-.456c-.355-.133-.75-.072-1.076.124a6.47 6.47 0 0 1-.22.128c-.331.183-.581.495-.644.869l-.213 1.281c-.09.543-.56.94-1.11.94h-2.594c-.55 0-1.019-.398-1.11-.94l-.213-1.281c-.062-.374-.312-.686-.644-.87a6.52 6.52 0 0 1-.22-.127c-.325-.196-.72-.257-1.076-.124l-1.217.456a1.125 1.125 0 0 1-1.369-.49l-1.297-2.247a1.125 1.125 0 0 1 .26-1.431l1.004-.827c.292-.24.437-.613.43-.991a6.932 6.932 0 0 1 0-.255c.007-.38-.138-.751-.43-.992l-1.004-.827a1.125 1.125 0 0 1-.26-1.43l1.297-2.247a1.125 1.125 0 0 1 1.37-.491l1.216.456c.356.133.751.072 1.076-.124.072-.044.146-.086.22-.128.332-.183.582-.495.644-.869l.214-1.28ZM15 12a3 3 0 1 1-6 0 3 3 0 0 1 6 0Z"/></svg>
<div class="a" style="left:372px;top:698px;width:1815px;height:2px;background:#eceef1;"></div>
<svg class="a" style="left:399px;top:711px" width="83" height="83" viewBox="0 0 83 83"><defs><linearGradient id="sky3" x1="0" y1="0" x2="0.3" y2="1"><stop offset="0" stop-color="#2d6dbd"/><stop offset="1" stop-color="#5e9ad8"/></linearGradient><linearGradient id="mt3" x1="0" y1="0" x2="0" y2="1"><stop offset="0" stop-color="#244c8a"/><stop offset="0.55" stop-color="#2f5d96"/><stop offset="1" stop-color="#3f6a82"/></linearGradient><linearGradient id="wt3" x1="0" y1="0" x2="0" y2="1"><stop offset="0" stop-color="#6a8db5"/><stop offset="0.5" stop-color="#5b83b1"/><stop offset="1" stop-color="#4f78a8"/></linearGradient><clipPath id="cp3"><rect width="83" height="83" rx="7"/></clipPath></defs><g clip-path="url(#cp3)"><rect width="83" height="83" fill="url(#sky3)"/><path d="M0 30 L20 24 L34 11.5 Q37 10.5 41 10.5 Q45.5 10.5 48.5 11.5 L68 26 L83 30 V50 H0 Z" fill="url(#mt3)"/><path d="M16 25.5 L34 11.5 Q37 10.5 41 10.5 Q45.5 10.5 48.5 11.5 L68.5 27.5 L63 26.5 L58 28 L53 25.5 L48 27.5 L43.5 25 L38.5 27.5 L33.5 25 L28 27.5 L22 26.5 Z" fill="#f1f4f8"/><path d="M0 22.5 Q8 21 15 23.5 L19 26 L9 29 L0 31 Z" fill="#e9eff6"/><rect y="47" width="83" height="13" fill="#3b6236"/><path d="M0 50 Q5 46.5 11 48.5 Q16 45.5 22 48 Q30 46.5 37 48.5 Q44 45.5 50 48 Q58 46.5 64 48.5 Q72 45.5 83 48 V55 H0 Z" fill="#58834a"/><path d="M0 53 Q10 51 20 53 Q35 51 50 53 Q65 51 83 53 V59 H0 Z" fill="#43693c"/><rect x="14" y="47.5" width="7" height="2.5" fill="#c9d2da" opacity="0.8"/><rect y="59" width="83" height="24" fill="url(#wt3)"/><path d="M4 74.5 Q25 72.5 50 74 Q62 75 78 73.5 L78 75.5 Q50 76.5 4 76.5 Z" fill="#a9bdd6" opacity="0.6"/><path d="M0 64 H83 V65 H0 Z" fill="#7f9fc3" opacity="0.5"/></g></svg>
<div class="t" id="t64" style="left:494.00px;top:712.92px;font-size:19px;line-height:19px;color:#3b86f2;font-weight:400;letter-spacing:0.495px;-webkit-text-stroke:0.45px #3b86f2;">Những ứng dụng học từ vựng tiếng Anh hiệu quả...</div>
<svg class="a" style="left:492px;top:737px" width="32" height="32" viewBox="0 0 32 32" fill="none" stroke="#a3a7ae" stroke-width="1.9"><rect x="6.8" y="6.2" width="18.6" height="18.6" rx="2.3"/><rect x="12" y="12.3" width="7.3" height="6.4" rx="1.6" fill="#a3a7ae" stroke="none"/><path d="M19 13.8 L22.1 13.2 V17.6 L19 17 Z" fill="#c2c5ca" stroke="none"/></svg>
<div class="t" id="t65" style="left:529.60px;top:744.11px;font-size:17px;line-height:17px;color:#4b5260;font-weight:400;letter-spacing:0.063px;">Live</div>
<div class="a" style="left:567px;top:742px;width:1px;height:21px;background:#dfe2e7;"></div>
<div class="t" id="t66" style="left:574.60px;top:744.11px;font-size:17px;line-height:17px;color:#4b5260;font-weight:400;letter-spacing:0.084px;">12277623627372</div>
<svg class="a" style="left:715px;top:737px" width="32" height="32" viewBox="0 0 32 32" fill="none" stroke="#3d88f3" stroke-width="2" stroke-linejoin="round"><rect x="13.3" y="7.1" width="11.2" height="10.9" rx="2"/><path d="M13.3 13 H10.1 Q8.1 13 8.1 15 V21.6 Q8.1 23.6 10.1 23.6 H17 Q19 23.6 19 21.6 V18"/></svg>
<svg class="a" style="left:494px;top:769px" width="28" height="28" viewBox="0 0 40 40"><defs><clipPath id="avcr3"><circle cx="20" cy="20" r="20"/></clipPath><filter id="avfr3" x="-20%" y="-20%" width="140%" height="140%"><feGaussianBlur stdDeviation="1.6"/></filter><linearGradient id="avpr3" x1="0" y1="0" x2="1" y2="0.3"><stop offset="0" stop-color="#8a3a80"/><stop offset="0.4" stop-color="#b5566e"/><stop offset="1" stop-color="#c9782e"/></linearGradient></defs><g clip-path="url(#avcr3)"><rect width="40" height="40" fill="#18227a"/><g filter="url(#avfr3)"><path d="M-5 -5 H45 V8 L0 15 H-5 Z" fill="#5ba69d"/><ellipse cx="11" cy="5" rx="7" ry="3" fill="#151830" transform="rotate(-20 11 5)"/><path d="M-5 17 L45 10 V14 L-5 20 Z" fill="#1b2470"/><ellipse cx="29" cy="18" rx="13" ry="7.5" fill="url(#avpr3)" transform="rotate(12 29 18)"/><path d="M2 22 Q20 24 42 28 L42 31 Q20 28 2 25 Z" fill="#0f1433" opacity="0.85"/><path d="M-5 32 Q20 30 45 34 V45 H-5 Z" fill="#1a2a8a"/><ellipse cx="8" cy="33" rx="5" ry="3" fill="#2f6a8a" opacity="0.6"/></g></g></svg>
<div class="t" id="t67" style="left:533.40px;top:774.11px;font-size:17px;line-height:17px;color:#6b7280;font-weight:400;letter-spacing:0.095px;">Tiếng Anh Tiểu học</div>
<div class="t" id="t68" style="left:1195.40px;top:741.77px;font-size:20px;line-height:20px;color:#8f949c;font-weight:400;letter-spacing:0.750px;">08:00</div>
<div class="t" id="t69" style="left:1254.40px;top:741.77px;font-size:20px;line-height:20px;color:#1f2532;font-weight:400;letter-spacing:-0.222px;">12/11/2024</div>
<div class="t" id="t70" style="left:1435.50px;top:741.77px;font-size:20px;line-height:20px;color:#1f2532;font-weight:400;letter-spacing:0.400px;">200</div>
<div class="t" id="t71" style="left:1564.50px;top:741.77px;font-size:20px;line-height:20px;color:#1f2532;font-weight:400;letter-spacing:0.400px;">25</div>
<div class="t" id="t72" style="left:1694.00px;top:741.77px;font-size:20px;line-height:20px;color:#1f2532;font-weight:400;letter-spacing:0.400px;">10</div>
<div class="t" id="t73" style="left:1823.00px;top:741.77px;font-size:20px;line-height:20px;color:#1f2532;font-weight:400;letter-spacing:0.400px;">4</div>
<div class="t" id="t74" style="left:1952.00px;top:741.77px;font-size:20px;line-height:20px;color:#1f2532;font-weight:400;letter-spacing:0.480px;">520,000đ</div>
<svg class="a" style="left:2117.8px;top:736px" width="32.5" height="32.5" viewBox="0 0 24 24" fill="none" stroke="#a3a7ae" stroke-width="1.5"><path d="M9.594 3.94c.09-.542.56-.94 1.11-.94h2.593c.55 0 1.02.398 1.11.94l.213 1.281c.063.374.313.686.645.87.074.04.147.083.22.127.325.196.72.257 1.075.124l1.217-.456a1.125 1.125 0 0 1 1.37.49l1.296 2.247a1.125 1.125 0 0 1-.26 1.431l-1.003.827c-.293.241-.438.613-.43.992a7.723 7.723 0 0 1 0 .255c-.008.378.137.75.43.991l1.004.827c.424.35.534.955.26 1.43l-1.298 2.247a1.125 1.125 0 0 1-1.369.491l-1.217-.456c-.355-.133-.75-.072-1.076.124a6.47 6.47 0 0 1-.22.128c-.331.183-.581.495-.644.869l-.213 1.281c-.09.543-.56.94-1.11.94h-2.594c-.55 0-1.019-.398-1.11-.94l-.213-1.281c-.062-.374-.312-.686-.644-.87a6.52 6.52 0 0 1-.22-.127c-.325-.196-.72-.257-1.076-.124l-1.217.456a1.125 1.125 0 0 1-1.369-.49l-1.297-2.247a1.125 1.125 0 0 1 .26-1.431l1.004-.827c.292-.24.437-.613.43-.991a6.932 6.932 0 0 1 0-.255c.007-.38-.138-.751-.43-.992l-1.004-.827a1.125 1.125 0 0 1-.26-1.43l1.297-2.247a1.125 1.125 0 0 1 1.37-.491l1.216.456c.356.133.751.072 1.076-.124.072-.044.146-.086.22-.128.332-.183.582-.495.644-.869l.214-1.28ZM15 12a3 3 0 1 1-6 0 3 3 0 0 1 6 0Z"/></svg>
<div class="a" style="left:372px;top:803px;width:1815px;height:2px;background:#eceef1;"></div>
<svg class="a" style="left:399px;top:816px" width="83" height="83" viewBox="0 0 83 83"><defs><linearGradient id="sky4" x1="0" y1="0" x2="0.3" y2="1"><stop offset="0" stop-color="#2d6dbd"/><stop offset="1" stop-color="#5e9ad8"/></linearGradient><linearGradient id="mt4" x1="0" y1="0" x2="0" y2="1"><stop offset="0" stop-color="#244c8a"/><stop offset="0.55" stop-color="#2f5d96"/><stop offset="1" stop-color="#3f6a82"/></linearGradient><linearGradient id="wt4" x1="0" y1="0" x2="0" y2="1"><stop offset="0" stop-color="#6a8db5"/><stop offset="0.5" stop-color="#5b83b1"/><stop offset="1" stop-color="#4f78a8"/></linearGradient><clipPath id="cp4"><rect width="83" height="83" rx="7"/></clipPath></defs><g clip-path="url(#cp4)"><rect width="83" height="83" fill="url(#sky4)"/><path d="M0 30 L20 24 L34 11.5 Q37 10.5 41 10.5 Q45.5 10.5 48.5 11.5 L68 26 L83 30 V50 H0 Z" fill="url(#mt4)"/><path d="M16 25.5 L34 11.5 Q37 10.5 41 10.5 Q45.5 10.5 48.5 11.5 L68.5 27.5 L63 26.5 L58 28 L53 25.5 L48 27.5 L43.5 25 L38.5 27.5 L33.5 25 L28 27.5 L22 26.5 Z" fill="#f1f4f8"/><path d="M0 22.5 Q8 21 15 23.5 L19 26 L9 29 L0 31 Z" fill="#e9eff6"/><rect y="47" width="83" height="13" fill="#3b6236"/><path d="M0 50 Q5 46.5 11 48.5 Q16 45.5 22 48 Q30 46.5 37 48.5 Q44 45.5 50 48 Q58 46.5 64 48.5 Q72 45.5 83 48 V55 H0 Z" fill="#58834a"/><path d="M0 53 Q10 51 20 53 Q35 51 50 53 Q65 51 83 53 V59 H0 Z" fill="#43693c"/><rect x="14" y="47.5" width="7" height="2.5" fill="#c9d2da" opacity="0.8"/><rect y="59" width="83" height="24" fill="url(#wt4)"/><path d="M4 74.5 Q25 72.5 50 74 Q62 75 78 73.5 L78 75.5 Q50 76.5 4 76.5 Z" fill="#a9bdd6" opacity="0.6"/><path d="M0 64 H83 V65 H0 Z" fill="#7f9fc3" opacity="0.5"/></g></svg>
<div class="t" id="t75" style="left:494.00px;top:817.92px;font-size:19px;line-height:19px;color:#3b86f2;font-weight:400;letter-spacing:0.461px;-webkit-text-stroke:0.45px #3b86f2;">Hướng dẫn học tiếng Anh giao tiếp cho người mới bắt đầu</div>
<svg class="a" style="left:492px;top:842px" width="32" height="32" viewBox="0 0 32 32" fill="none" stroke="#a3a7ae" stroke-width="1.9"><rect x="6.8" y="6.2" width="18.6" height="18.6" rx="2.3"/><rect x="12" y="12.3" width="7.3" height="6.4" rx="1.6" fill="#a3a7ae" stroke="none"/><path d="M19 13.8 L22.1 13.2 V17.6 L19 17 Z" fill="#c2c5ca" stroke="none"/></svg>
<div class="t" id="t76" style="left:529.60px;top:849.11px;font-size:17px;line-height:17px;color:#4b5260;font-weight:400;letter-spacing:0.063px;">Live</div>
<div class="a" style="left:567px;top:847px;width:1px;height:21px;background:#dfe2e7;"></div>
<div class="t" id="t77" style="left:574.60px;top:849.11px;font-size:17px;line-height:17px;color:#4b5260;font-weight:400;letter-spacing:0.084px;">12277623627372</div>
<svg class="a" style="left:715px;top:842px" width="32" height="32" viewBox="0 0 32 32" fill="none" stroke="#3d88f3" stroke-width="2" stroke-linejoin="round"><rect x="13.3" y="7.1" width="11.2" height="10.9" rx="2"/><path d="M13.3 13 H10.1 Q8.1 13 8.1 15 V21.6 Q8.1 23.6 10.1 23.6 H17 Q19 23.6 19 21.6 V18"/></svg>
<svg class="a" style="left:494px;top:874px" width="28" height="28" viewBox="0 0 40 40"><defs><clipPath id="avcr4"><circle cx="20" cy="20" r="20"/></clipPath><filter id="avfr4" x="-20%" y="-20%" width="140%" height="140%"><feGaussianBlur stdDeviation="1.6"/></filter><linearGradient id="avpr4" x1="0" y1="0" x2="1" y2="0.3"><stop offset="0" stop-color="#8a3a80"/><stop offset="0.4" stop-color="#b5566e"/><stop offset="1" stop-color="#c9782e"/></linearGradient></defs><g clip-path="url(#avcr4)"><rect width="40" height="40" fill="#18227a"/><g filter="url(#avfr4)"><path d="M-5 -5 H45 V8 L0 15 H-5 Z" fill="#5ba69d"/><ellipse cx="11" cy="5" rx="7" ry="3" fill="#151830" transform="rotate(-20 11 5)"/><path d="M-5 17 L45 10 V14 L-5 20 Z" fill="#1b2470"/><ellipse cx="29" cy="18" rx="13" ry="7.5" fill="url(#avpr4)" transform="rotate(12 29 18)"/><path d="M2 22 Q20 24 42 28 L42 31 Q20 28 2 25 Z" fill="#0f1433" opacity="0.85"/><path d="M-5 32 Q20 30 45 34 V45 H-5 Z" fill="#1a2a8a"/><ellipse cx="8" cy="33" rx="5" ry="3" fill="#2f6a8a" opacity="0.6"/></g></g></svg>
<div class="t" id="t78" style="left:533.40px;top:879.11px;font-size:17px;line-height:17px;color:#6b7280;font-weight:400;letter-spacing:0.095px;">Tiếng Anh Tiểu học</div>
<div class="t" id="t79" style="left:1195.40px;top:846.77px;font-size:20px;line-height:20px;color:#8f949c;font-weight:400;letter-spacing:0.750px;">08:00</div>
<div class="t" id="t80" style="left:1254.40px;top:846.77px;font-size:20px;line-height:20px;color:#1f2532;font-weight:400;letter-spacing:-0.222px;">12/11/2024</div>
<div class="t" id="t81" style="left:1435.50px;top:846.77px;font-size:20px;line-height:20px;color:#1f2532;font-weight:400;letter-spacing:0.400px;">200</div>
<div class="t" id="t82" style="left:1564.50px;top:846.77px;font-size:20px;line-height:20px;color:#1f2532;font-weight:400;letter-spacing:0.400px;">20</div>
<div class="t" id="t83" style="left:1694.00px;top:846.77px;font-size:20px;line-height:20px;color:#1f2532;font-weight:400;letter-spacing:0.400px;">8</div>
<div class="t" id="t84" style="left:1823.00px;top:846.77px;font-size:20px;line-height:20px;color:#1f2532;font-weight:400;letter-spacing:0.400px;">6</div>
<div class="t" id="t85" style="left:1952.00px;top:846.77px;font-size:20px;line-height:20px;color:#1f2532;font-weight:400;letter-spacing:0.480px;">900,000đ</div>
<svg class="a" style="left:2117.8px;top:841px" width="32.5" height="32.5" viewBox="0 0 24 24" fill="none" stroke="#a3a7ae" stroke-width="1.5"><path d="M9.594 3.94c.09-.542.56-.94 1.11-.94h2.593c.55 0 1.02.398 1.11.94l.213 1.281c.063.374.313.686.645.87.074.04.147.083.22.127.325.196.72.257 1.075.124l1.217-.456a1.125 1.125 0 0 1 1.37.49l1.296 2.247a1.125 1.125 0 0 1-.26 1.431l-1.003.827c-.293.241-.438.613-.43.992a7.723 7.723 0 0 1 0 .255c-.008.378.137.75.43.991l1.004.827c.424.35.534.955.26 1.43l-1.298 2.247a1.125 1.125 0 0 1-1.369.491l-1.217-.456c-.355-.133-.75-.072-1.076.124a6.47 6.47 0 0 1-.22.128c-.331.183-.581.495-.644.869l-.213 1.281c-.09.543-.56.94-1.11.94h-2.594c-.55 0-1.019-.398-1.11-.94l-.213-1.281c-.062-.374-.312-.686-.644-.87a6.52 6.52 0 0 1-.22-.127c-.325-.196-.72-.257-1.076-.124l-1.217.456a1.125 1.125 0 0 1-1.369-.49l-1.297-2.247a1.125 1.125 0 0 1 .26-1.431l1.004-.827c.292-.24.437-.613.43-.991a6.932 6.932 0 0 1 0-.255c.007-.38-.138-.751-.43-.992l-1.004-.827a1.125 1.125 0 0 1-.26-1.43l1.297-2.247a1.125 1.125 0 0 1 1.37-.491l1.216.456c.356.133.751.072 1.076-.124.072-.044.146-.086.22-.128.332-.183.582-.495.644-.869l.214-1.28ZM15 12a3 3 0 1 1-6 0 3 3 0 0 1 6 0Z"/></svg>
<div class="a" style="left:372px;top:908px;width:1815px;height:2px;background:#eceef1;"></div>
<div class="t" id="t86" style="left:400.20px;top:972.42px;font-size:19px;line-height:19px;color:#1f2532;font-weight:400;letter-spacing:0.069px;">Từ 1 đến 10 trên tổng 10</div>
<div class="t" id="t87" style="left:1151.00px;top:972.42px;font-size:19px;line-height:19px;color:#1f2532;font-weight:400;letter-spacing:0.715px;">Hiển thị</div>
<div class="a" style="left:1236px;top:956px;width:86px;height:49px;box-sizing:border-box;border:1.5px solid #dfe2e7;border-radius:6px;"></div>
<div class="t" id="t88" style="left:1253.30px;top:971.27px;font-size:20px;line-height:20px;color:#1f2532;font-weight:400;letter-spacing:0.200px;">20</div>
<svg class="a" style="left:1304px;top:978px" width="12" height="7" viewBox="0 0 12 7"><path d="M0 0 H12 L6 7 Z" fill="#8d939c"/></svg>
<div class="t" id="t89" style="left:1337.40px;top:972.42px;font-size:19px;line-height:19px;color:#1f2532;font-weight:400;letter-spacing:0.369px;">Kết quả</div>
<svg class="a" style="left:2048px;top:972px" width="14" height="18" viewBox="0 0 14 18" fill="none" stroke="#c9ccd2" stroke-width="1.8"><path d="M11 2 L3 9 L11 16"/></svg>
<div class="a" style="left:2081px;top:965px;width:33px;height:33px;background:#2f7ff0;border-radius:50%;"></div>
<div class="t" id="t90" style="left:2092.00px;top:971.92px;font-size:19px;line-height:19px;color:#ffffff;font-weight:400;letter-spacing:0.000px;">1</div>
<svg class="a" style="left:2136px;top:972px" width="14" height="18" viewBox="0 0 14 18" fill="none" stroke="#c9ccd2" stroke-width="1.8"><path d="M3 2 L11 9 L3 16"/></svg>
</body></html>
